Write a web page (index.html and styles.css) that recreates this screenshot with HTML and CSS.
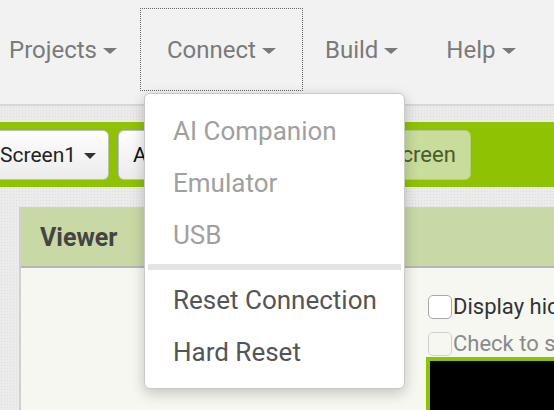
FILE: index.html
```html
<!DOCTYPE html>
<html>
<head>
<meta charset="utf-8">
<link rel="stylesheet" href="styles.css">
</head>
<body>
<div class="topbar">
  <div class="menu first">Projects<span class="caret"></span></div>
  <div class="menu focused">Connect<span class="caret"></span></div>
  <div class="menu">Build<span class="caret"></span></div>
  <div class="menu">Help<span class="caret"></span></div>
</div>
<div class="work">
  <div class="toolbar">
    <div class="btn screen">Screen1<span class="caret dark"></span></div>
    <div class="btn add">Add Screen ...</div>
    <div class="btn remove">Remove Screen</div>
  </div>
  <div class="viewer">
    <div class="viewer-head">Viewer</div>
    <div class="viewer-body">
      <div class="checks">
        <label class="check"><span class="box"></span>Display hidden components in Viewer</label>
        <label class="check muted"><span class="box faint"></span>Check to see Preview on Tablet size.</label>
        <div class="phone"></div>
      </div>
    </div>
  </div>
</div>
<div class="dropdown">
  <div class="item disabled">AI Companion</div>
  <div class="item disabled">Emulator</div>
  <div class="item disabled">USB</div>
  <div class="sep"></div>
  <div class="item">Reset Connection</div>
  <div class="item">Hard Reset</div>
</div>
</body>
</html>
```
FILE: styles.css
```css
* { box-sizing: border-box; }
html, body { margin: 0; padding: 0; }
body {
  width: 554px;
  height: 410px;
  overflow: hidden;
  font-family: Roboto, "Liberation Sans", sans-serif;
  background: #ebebeb;
  position: relative;
}
.topbar {
  height: 106px;
  background: #f2f2f2;
  border-bottom: 2px solid #d6d6d6;
  display: flex;
  align-items: flex-start;
  padding-top: 8px;
}
.menu {
  height: 83px;
  display: flex;
  align-items: center;
  padding: 0 25px 0 21px;
  font-size: 24px;
  color: #7a7a7a;
  border: 1px solid transparent;
  white-space: nowrap;
}
.menu.first { padding-left: 9px; padding-right: 22px; border-left: 0; }
.menu.focused { border: 1px dotted #666; padding: 0 26px; }
.caret {
  display: inline-block;
  width: 0; height: 0;
  margin-left: 6px;
  margin-top: 3px;
  border-left: 7px solid transparent;
  border-right: 7px solid transparent;
  border-top: 6px solid #7a7a7a;
}
.caret.dark {
  margin-left: 8px;
  border-left-width: 6px;
  border-right-width: 6px;
  border-top-color: #333;
}
.work {
  background-color: #ebebeb;
  background-image: radial-gradient(#dedede 0.6px, transparent 0.8px);
  background-size: 3px 3px;
  height: 304px;
  padding-top: 16px;
}
.toolbar {
  height: 65px;
  background: #8fc202;
  display: flex;
  align-items: center;
  gap: 9px;
}
.btn {
  height: 50px;
  display: flex;
  align-items: center;
  border-radius: 6px;
  font-size: 21px;
  white-space: nowrap;
  padding: 0 14px;
  flex: none;
  overflow: hidden;
}
.btn.screen {
  margin-left: -15px;
  width: 124px;
  background: linear-gradient(#fdfdfd, #ececec);
  border: 1px solid #bdbdbd;
  color: #222;
}
.btn.add {
  width: 162px;
  background: linear-gradient(#fdfdfd, #ececec);
  border: 1px solid #bdbdbd;
  color: #111;
}
.btn.remove {
  font-size: 22px;
  background: #c8dc9c;
  border: 1px solid #b2c98a;
  color: #4b5a2c;
}
.viewer {
  margin-top: 20px;
  margin-left: 19px;
  height: 210px;
  border-left: 2px solid #cfcfcf;
  border-top: 1px solid #cfcfcf;
  background: #f7f7f2;
  overflow: hidden;
}
.viewer-head {
  height: 60px;
  background: #c9d9a6;
  border-bottom: 2px solid #b6b6b6;
  display: flex;
  align-items: center;
  padding-left: 19px;
  font-weight: bold;
  font-size: 25px;
  color: #444;
}
.viewer-body {
  padding-left: 407px;
  padding-top: 26px;
}
.checks {
  display: flex;
  flex-direction: column;
}
.check {
  display: flex;
  align-items: center;
  white-space: nowrap;
  font-size: 22px;
  color: #333;
  height: 25px;
  margin-bottom: 12px;
}
.check.muted { color: #8a8a8a; margin-bottom: 0; }
.box {
  width: 24px;
  height: 24px;
  border: 1px solid #a9a9a9;
  border-radius: 5px;
  background: #fff;
  margin-right: 1px;
  flex: none;
}
.box.faint { border-color: #d0d0d0; background: #f7f7f2; }
.phone {
  margin-top: 1px;
  margin-left: -2px;
  height: 60px;
  width: 200px;
  background: #000;
  border: 4px solid #8fc202;
}
.dropdown {
  position: absolute;
  left: 144px;
  top: 93px;
  width: 261px;
  height: 296px;
  background: #fff;
  border: 1px solid #c9c9c9;
  border-radius: 6px;
  box-shadow: 0 4px 14px rgba(0,0,0,0.22);
  padding: 11px 0;
}
.item {
  height: 52px;
  display: flex;
  align-items: center;
  padding-left: 28px;
  font-size: 26px;
  color: #555;
  white-space: nowrap;
}
.item.disabled { color: #a0a0a0; }
.sep {
  height: 6px;
  margin: 3px 3px 4px;
  background: #e4e4e4;
}
```
